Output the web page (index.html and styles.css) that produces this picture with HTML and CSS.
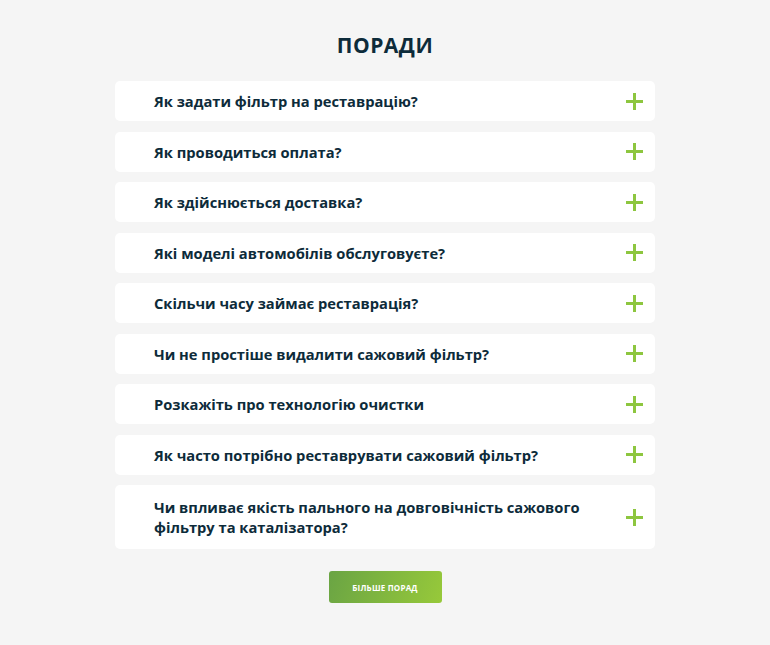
FILE: index.html
```html
<!DOCTYPE html>
<html lang="uk">
<head>
<meta charset="utf-8">
<link rel="stylesheet" href="styles.css">
</head>
<body>
<section class="faq">
  <h2 class="faq-title">ПОРАДИ</h2>
  <div class="faq-list">
    <div class="faq-item"><span class="faq-q">Як задати фільтр на реставрацію?</span><span class="plus"></span></div>
    <div class="faq-item"><span class="faq-q">Як проводиться оплата?</span><span class="plus"></span></div>
    <div class="faq-item"><span class="faq-q">Як здійснюється доставка?</span><span class="plus"></span></div>
    <div class="faq-item"><span class="faq-q">Які моделі автомобілів обслуговуєте?</span><span class="plus"></span></div>
    <div class="faq-item"><span class="faq-q">Скільчи часу займає реставрація?</span><span class="plus"></span></div>
    <div class="faq-item"><span class="faq-q">Чи не простіше видалити сажовий фільтр?</span><span class="plus"></span></div>
    <div class="faq-item"><span class="faq-q">Розкажіть про технологію очистки</span><span class="plus"></span></div>
    <div class="faq-item"><span class="faq-q">Як часто потрібно реставрувати сажовий фільтр?</span><span class="plus"></span></div>
    <div class="faq-item tall"><span class="faq-q">Чи впливає якість пального на довговічність сажового фільтру та каталізатора?</span><span class="plus"></span></div>
  </div>
  <a class="more-btn" href="#">БІЛЬШЕ ПОРАД</a>
</section>
</body>
</html>
```
FILE: styles.css
```css
html, body {
  margin: 0;
  padding: 0;
  background: #f5f5f5;
}
body {
  font-family: "Open Sans", "DejaVu Sans", sans-serif;
  color: #0d2b3a;
}
.faq {
  width: 540px;
  margin: 0 auto;
  padding-top: 31px;
  display: flex;
  flex-direction: column;
  align-items: center;
}
.faq-title {
  margin: 0 0 22px;
  font-size: 21px;
  font-weight: 700;
  letter-spacing: 0.5px;
  line-height: 28px;
  color: #0d2b3a;
}
.faq-list {
  width: 540px;
  display: flex;
  flex-direction: column;
  gap: 10.5px;
}
.faq-item {
  background: #fff;
  border-radius: 5px;
  min-height: 40px;
  box-sizing: border-box;
  padding: 10px 12px 10px 39px;
  display: flex;
  align-items: center;
  justify-content: space-between;
}
.faq-item.tall {
  min-height: 64px;
}
.faq-q {
  font-size: 14.7px;
  font-weight: 700;
  line-height: 20px;
  max-width: 440px;
}
.plus {
  position: relative;
  width: 17px;
  height: 17px;
  flex: none;
}
.plus::before, .plus::after {
  content: "";
  position: absolute;
  background: #8dc63f;
}
.plus::before {
  left: 0; right: 0; top: 7px; height: 3px;
}
.plus::after {
  top: 0; bottom: 0; left: 7px; width: 3px;
}
.more-btn {
  margin-top: 22px;
  width: 113px;
  height: 32px;
  border-radius: 3px;
  background: linear-gradient(110deg, #6aa444 0%, #97c93a 100%);
  color: #fff;
  font-size: 8px;
  font-weight: 700;
  text-decoration: none;
  display: flex;
  align-items: center;
  justify-content: center;
  letter-spacing: 0.2px;
}
```
